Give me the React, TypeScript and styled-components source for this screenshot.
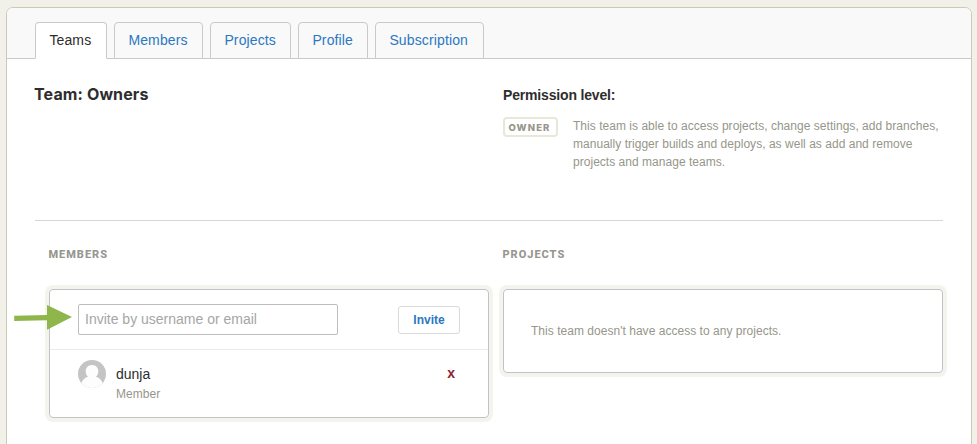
import React from "react";
import styled, { createGlobalStyle } from "styled-components";

const GlobalStyle = createGlobalStyle`
  *, *::before, *::after { box-sizing: border-box; }
  body {
    margin: 0;
    background: #f1f1e9;
    color: #2d2d2d;
    font-family: "Liberation Sans", Helvetica, Arial, sans-serif;
    font-size: 14px;
    overflow: hidden;
  }
  h1, h2, h3, p, ul { margin: 0; padding: 0; }
`;

const Page = styled.div`
  height: 444px;
  padding: 7px 5px 0 6px;
  overflow: hidden;
  position: relative;
`;

const Panel = styled.main`
  height: 480px;
  background: #fff;
  border: 1px solid #cbcbb5;
  border-radius: 7px;
  overflow: hidden;
`;

const TabBar = styled.nav`
  display: flex;
  align-items: flex-end;
  gap: 7px;
  height: 51px;
  padding-left: 28px;
  background: #f9f9f9;
  box-shadow: inset 0 -1px 0 #c9c9c9;
`;

const Tab = styled.a<{ $width: number; $active?: boolean }>`
  width: ${(p) => p.$width}px;
  height: 37px;
  padding-left: 13.4px;
  line-height: 35px;
  letter-spacing: 0.13px;
  white-space: nowrap;
  color: ${(p) => (p.$active ? "#2d2d2d" : "#2a78c2")};
  background: ${(p) => (p.$active ? "#fff" : "#f9f9f9")};
  border: 1px solid #c9c9c9;
  border-bottom-color: ${(p) => (p.$active ? "#fff" : "#c9c9c9")};
  border-radius: 4px 4px 0 0;
`;

const Content = styled.div`
  padding: 0 28px;
`;

const Summary = styled.section`
  display: grid;
  grid-template-columns: 468px 1fr;
  height: 162px;
  border-bottom: 1px solid #d6d6d6;
`;

const TeamTitle = styled.h1`
  margin-left: -1px;
  padding-top: 25px;
  font: 700 16px/20px Inter, sans-serif;
  letter-spacing: 0.13px;
`;

const PermissionTitle = styled.h2`
  padding-top: 27px;
  font-size: 14px;
  line-height: 18px;
  letter-spacing: -0.17px;
`;

const PermissionRow = styled.div`
  display: flex;
  align-items: flex-start;
  gap: 15px;
  margin-top: 13px;
`;

const Badge = styled.span`
  flex: none;
  width: 55px;
  height: 20px;
  border: 2px solid #e6e8da;
  border-radius: 4px;
  color: #96968a;
  font: 800 9.5px/17px Inter, sans-serif;
  letter-spacing: 1.1px;
  padding-left: 3.5px;
`;

const Muted = styled.p`
  color: #96968a;
  font-size: 12px;
  line-height: 18px;
  letter-spacing: 0.03px;
  white-space: nowrap;
`;

const Columns = styled.div`
  display: grid;
  grid-template-columns: 440px 440px;
  column-gap: 14px;
  align-items: start;
  padding: 26px 0 0 14px;
`;

const SectionTitle = styled.h3`
  height: 42px;
  margin-left: -0.6px;
  color: #96968f;
  font: 800 11px/16px Roboto, sans-serif;
  letter-spacing: 1px;
`;

const Card = styled.div`
  border: 1px solid #c3c3c3;
  border-radius: 4px;
  box-shadow: 0 0 0 4px #f3f4ee;
`;

const EmptyCard = styled(Card)`
  height: 84px;
  padding: 32px 27px;
`;

const InviteForm = styled.form`
  display: flex;
  align-items: center;
  justify-content: space-between;
  height: 60px;
  padding: 0 28px;
  border-bottom: 1px solid #ebebeb;
`;

const InviteInput = styled.input`
  width: 260px;
  height: 31px;
  padding: 0 6px 2px;
  border: 1px solid #bdbdbd;
  border-radius: 2px;
  font: 14px "Liberation Sans", Arial, sans-serif;
  outline: none;
  &::placeholder { color: #a6a6a6; opacity: 1; }
`;

const InviteButton = styled.button`
  width: 62px;
  height: 28px;
  padding: 0;
  background: #fff;
  border: 1px solid #dadada;
  border-radius: 3px;
  color: #2a78c2;
  font: 700 12px "Liberation Sans", Arial, sans-serif;
`;

const MemberRow = styled.div`
  display: flex;
  height: 67px;
  padding: 10px 33px 0 28px;
`;

const Avatar = styled.svg`
  flex: none;
  width: 28px;
  height: 28px;
`;

const MemberText = styled.div`
  flex: 1;
  padding: 5px 0 0 10px;
  line-height: 18px;
`;

const Role = styled(Muted)`
  margin-top: 2px;
`;

const RemoveButton = styled.button`
  height: 20px;
  margin-top: 3px;
  padding: 0;
  border: 0;
  background: none;
  color: #8b2332;
  font: 700 14px/20px "Liberation Sans", Arial, sans-serif;
`;

const Pointer = styled.svg`
  position: absolute;
  left: 14px;
  top: 304px;
  width: 60px;
  height: 27px;
`;

const tabs = [
  { label: "Teams", width: 72 },
  { label: "Members", width: 89 },
  { label: "Projects", width: 81 },
  { label: "Profile", width: 70 },
  { label: "Subscription", width: 109 },
];

export default function App() {
  return (
    <Page>
      <GlobalStyle />
      <Panel>
        <TabBar>
          {tabs.map((tab, i) => (
            <Tab key={tab.label} $width={tab.width} $active={i === 0}>
              {tab.label}
            </Tab>
          ))}
        </TabBar>
        <Content>
          <Summary>
            <TeamTitle>Team: Owners</TeamTitle>
            <div>
              <PermissionTitle>Permission level:</PermissionTitle>
              <PermissionRow>
                <Badge>OWNER</Badge>
                <Muted>
                  This team is able to access projects, change settings, add branches,
                  <br />
                  manually trigger builds and deploys, as well as add and remove
                  <br />
                  projects and manage teams.
                </Muted>
              </PermissionRow>
            </div>
          </Summary>
          <Columns>
            <section>
              <SectionTitle>MEMBERS</SectionTitle>
              <Card>
                <InviteForm>
                  <InviteInput placeholder="Invite by username or email" />
                  <InviteButton type="button">Invite</InviteButton>
                </InviteForm>
                <MemberRow>
                  <Avatar viewBox="0 0 28 28">
                    <defs>
                      <clipPath id="avatar-circle">
                        <circle cx="14" cy="14" r="14" />
                      </clipPath>
                    </defs>
                    <g clipPath="url(#avatar-circle)">
                      <rect width="28" height="28" fill="#c4c4c4" />
                      <path
                        d="M14 5C9.800 5 7.700 8 7.700 11.200c0 2.400 0.900 4.200 2.400 5.400C6.500 17.800 4 20.500 2.500 25V28h23v-3c-1.500-4.500-4-7.200-7.600-8.400 1.500-1.200 2.400-3 2.400-5.400C20.300 8 18.200 5 14 5Z"
                        fill="#fdfdfd"
                      />
                    </g>
                  </Avatar>
                  <MemberText>
                    <div>dunja</div>
                    <Role>Member</Role>
                  </MemberText>
                  <RemoveButton>x</RemoveButton>
                </MemberRow>
              </Card>
            </section>
            <section>
              <SectionTitle>PROJECTS</SectionTitle>
              <EmptyCard>
                <Muted>This team doesn't have access to any projects.</Muted>
              </EmptyCard>
            </section>
          </Columns>
        </Content>
      </Panel>
      <Pointer viewBox="0 0 60 27">
        <path d="M0.200 11.800 33 11V1L58 13 33 25.800V16.200L0.200 16.900Z" fill="#8fb64b" />
      </Pointer>
    </Page>
  );
}
